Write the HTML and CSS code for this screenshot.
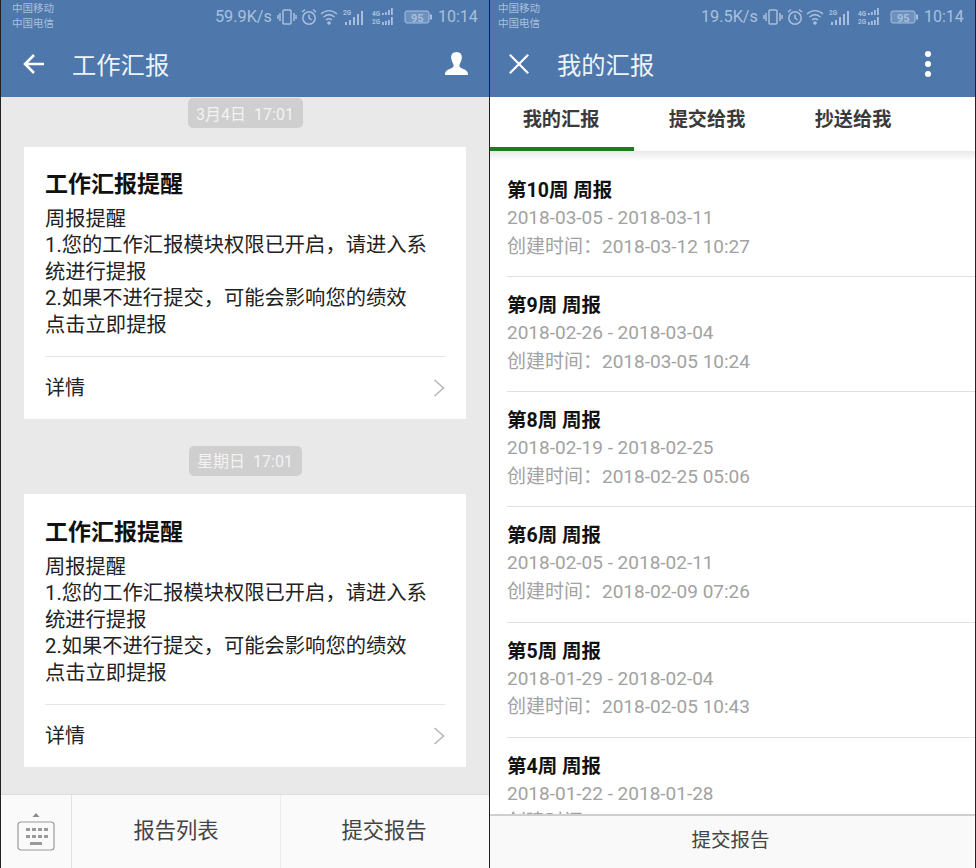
FILE: index.html
```html
<!DOCTYPE html>
<html lang="zh-CN">
<head>
<meta charset="utf-8">
<title>工作汇报</title>
<link rel="stylesheet" href="styles.css">
</head>
<body>
<svg class="defs" width="0" height="0" aria-hidden="true">
  <defs>
    <symbol id="st" viewBox="0 0 156 20">
      <g fill="none" stroke="currentColor" stroke-width="1.500">
        <rect x="6" y="3" width="8" height="14" rx="1"/>
        <path d="M3 6v8M1 8v4M17 6v8M19 8v4"/>
        <circle cx="32" cy="11" r="6.200"/>
        <path d="M32 7.500V11l2.500 2M25 5l3-2.500M39 5l-3-2.500"/>
        <path d="M44 7c5-4.500 11-4.500 16 0M46.500 10c3.500-3 7.500-3 11 0M49 13c2-1.600 4-1.600 6 0"/>
      </g>
      <g fill="currentColor">
        <circle cx="52" cy="16" r="1.800"/>
        <text x="66" y="8" class="tiny">2G</text>
        <rect x="68" y="15" width="2" height="3"/><rect x="72" y="13" width="2" height="5"/><rect x="76" y="10" width="2" height="8"/><rect x="80" y="7" width="2" height="11"/><rect x="84" y="4" width="2" height="14"/>
        <text x="95" y="9" class="tiny">4G</text>
        <text x="95" y="17" class="tiny">2G</text>
        <rect x="105" y="6" width="1.800" height="2"/><rect x="108" y="5" width="1.800" height="3"/><rect x="111" y="3" width="1.800" height="5"/><rect x="114" y="1" width="1.800" height="7"/>
        <rect x="105" y="15" width="1.800" height="3"/><rect x="108" y="14" width="1.800" height="4"/><rect x="111" y="13" width="1.800" height="5"/><rect x="114" y="10" width="1.800" height="8"/>
        <rect x="128" y="4" width="24" height="12" rx="2" opacity=".35"/>
        <rect x="153" y="7.500" width="2" height="5"/>
        <text x="134" y="14.500" class="batt">95</text>
      </g>
      <rect x="128" y="4" width="24" height="12" rx="2" fill="none" stroke="currentColor" stroke-width="1"/>
    </symbol>
  </defs>
</svg>

<main class="screens">
  <section class="phone phone-left">
    <header class="appbar">
      <div class="status">
        <div class="carriers"><span>中国移动</span><span>中国电信</span></div>
        <span class="speed">59.9K/s</span>
        <svg class="status-icons"><use href="#st"/></svg>
        <span class="clock">10:14</span>
      </div>
      <div class="titlebar">
        <svg class="nav-icon" viewBox="0 0 26 26"><path d="M23 13H4M13 4l-9 9 9 9" fill="none" stroke="#fff" stroke-width="2.600"/></svg>
        <h1 class="title title-left">工作汇报</h1>
        <svg class="user-icon" viewBox="0 0 26 26"><path d="M13 1c-4 0-6 3-5.500 6.500C8 11 9.500 13 10 14.500c.2 2-1 3-3.500 4C3.500 19.500 1 21 1 25h24c0-4-2.500-5.500-5.500-6.500-2.500-1-3.700-2-3.500-4 .5-1.500 2-3.500 2.500-7C19 4 17 1 13 1z" fill="#fff"/></svg>
      </div>
    </header>

    <div class="chat">
      <div class="pill pill-first">3月4日&nbsp;&nbsp;17:01</div>
      <article class="card">
        <h2 class="card-title">工作汇报提醒</h2>
        <p class="card-body">周报提醒<br>1.您的工作汇报模块权限已开启，请进入系统进行提报<br>2.如果不进行提交，可能会影响您的绩效<br>点击立即提报</p>
        <div class="card-foot">
          <span>详情</span>
          <svg class="chev" viewBox="0 0 12 18"><path d="M1.500 1l9 8-9 8" fill="none" stroke="#b5b5b5" stroke-width="1.500"/></svg>
        </div>
      </article>
      <div class="pill">星期日&nbsp;&nbsp;17:01</div>
      <article class="card card-second">
        <h2 class="card-title">工作汇报提醒</h2>
        <p class="card-body">周报提醒<br>1.您的工作汇报模块权限已开启，请进入系统进行提报<br>2.如果不进行提交，可能会影响您的绩效<br>点击立即提报</p>
        <div class="card-foot">
          <span>详情</span>
          <svg class="chev" viewBox="0 0 12 18"><path d="M1.500 1l9 8-9 8" fill="none" stroke="#b5b5b5" stroke-width="1.500"/></svg>
        </div>
      </article>
    </div>

    <footer class="menu">
      <div class="menu-kb">
        <svg class="kb-icon" viewBox="0 0 40 40">
          <path d="M20 1l3.500 4h-7z" fill="#8a8a8a"/>
          <rect x="2" y="10" width="36" height="28" rx="3" fill="none" stroke="#9a9a9a" stroke-width="1.200"/>
          <g fill="#9a9a9a">
            <rect x="10" y="16" width="4" height="3"/><rect x="16" y="16" width="4" height="3"/><rect x="22" y="16" width="4" height="3"/><rect x="28" y="16" width="4" height="3"/>
            <rect x="10" y="23" width="4" height="3"/><rect x="16" y="23" width="4" height="3"/><rect x="22" y="23" width="4" height="3"/><rect x="28" y="23" width="4" height="3"/>
            <rect x="14" y="30" width="12" height="3"/>
          </g>
        </svg>
      </div>
      <div class="menu-item menu-list">报告列表</div>
      <div class="menu-item menu-submit">提交报告</div>
    </footer>
  </section>

  <section class="phone phone-right">
    <header class="appbar">
      <div class="status">
        <div class="carriers"><span>中国移动</span><span>中国电信</span></div>
        <span class="speed">19.5K/s</span>
        <svg class="status-icons"><use href="#st"/></svg>
        <span class="clock">10:14</span>
      </div>
      <div class="titlebar">
        <svg class="nav-icon close-icon" viewBox="0 0 24 24"><path d="M2 2l20 20M22 2L2 22" fill="none" stroke="#fff" stroke-width="2.400"/></svg>
        <h1 class="title title-right">我的汇报</h1>
        <svg class="more-icon" viewBox="0 0 8 28"><circle cx="4" cy="4" r="3" fill="#fff"/><circle cx="4" cy="14" r="3" fill="#fff"/><circle cx="4" cy="24" r="3" fill="#fff"/></svg>
      </div>
    </header>

    <nav class="tabs">
      <div class="tab tab-active">我的汇报</div>
      <div class="tab">提交给我</div>
      <div class="tab">抄送给我</div>
    </nav>

    <div class="list">
      <div class="row"><h3>第10周 周报</h3><p>2018-03-05 - 2018-03-11</p><p>创建时间：2018-03-12 10:27</p></div>
      <div class="row"><h3>第9周 周报</h3><p>2018-02-26 - 2018-03-04</p><p>创建时间：2018-03-05 10:24</p></div>
      <div class="row"><h3>第8周 周报</h3><p>2018-02-19 - 2018-02-25</p><p>创建时间：2018-02-25 05:06</p></div>
      <div class="row"><h3>第6周 周报</h3><p>2018-02-05 - 2018-02-11</p><p>创建时间：2018-02-09 07:26</p></div>
      <div class="row"><h3>第5周 周报</h3><p>2018-01-29 - 2018-02-04</p><p>创建时间：2018-02-05 10:43</p></div>
      <div class="row"><h3>第4周 周报</h3><p>2018-01-22 - 2018-01-28</p><p>创建时间：2018-01-29 09:12</p></div>
    </div>

    <footer class="submit">提交报告</footer>
  </section>
</main>
</body>
</html>
```

FILE: styles.css
```css
* { box-sizing: border-box; margin: 0; padding: 0; }

html, body {
  width: 976px;
  height: 868px;
  overflow: hidden;
  background: #222;
}

body {
  font-family: Roboto, "Noto Sans CJK SC", "Liberation Sans", sans-serif;
}

.defs { display: block; height: 0; }

.tiny { font: 700 6.500px Roboto, sans-serif; }
.batt { font: 700 11px Roboto, sans-serif; }

.screens {
  display: flex;
  width: 976px;
  height: 868px;
}

.phone {
  display: flex;
  flex-direction: column;
  height: 868px;
  overflow: hidden;
}

.phone-left {
  width: 488px;
  margin-left: 1px;
  background: #e9e9e9;
}

.phone-right {
  width: 485px;
  margin-left: 1px;
  background: #fff;
}

.appbar {
  flex: none;
  height: 97px;
  background: #4e77ab;
}

.status {
  display: flex;
  align-items: center;
  height: 30px;
  color: #a9c0dd;
}

.carriers {
  display: flex;
  flex-direction: column;
  gap: 4px;
  flex: 1;
  padding-top: 1px;
  font-size: 10.500px;
  line-height: 11px;
}

.phone-left .carriers { padding-left: 11px; }
.phone-right .carriers { padding-left: 8px; }

.speed {
  font-size: 16.300px;
  line-height: 30px;
  margin-top: 3px;
  margin-right: 5px;
}

.status-icons {
  width: 156px;
  height: 20px;
  margin-top: 3px;
  margin-right: 5px;
}

.clock {
  font-size: 16px;
  line-height: 30px;
  width: 40px;
  margin-top: 3px;
  margin-right: 11px;
}

.titlebar {
  display: flex;
  align-items: center;
  height: 67px;
}

.nav-icon {
  flex: none;
  width: 26px;
  height: 26px;
  margin-left: 20px;
}

.close-icon {
  width: 22px;
  height: 22px;
  margin-left: 18px;
}

.title {
  flex: 1;
  font-size: 24.300px;
  font-weight: 400;
  color: #eef3f9;
}

.title-left { margin-left: 25px; }
.title-right { margin-left: 27px; }

.user-icon {
  flex: none;
  width: 25px;
  height: 25px;
  margin-right: 20px;
}

.more-icon {
  flex: none;
  width: 8px;
  height: 28px;
  margin-right: 43px;
}

.chat {
  flex: 1;
  display: flex;
  flex-direction: column;
  align-items: center;
  overflow: hidden;
}

.pill {
  width: 113px;
  height: 30px;
  margin-top: 27px;
  border-radius: 5px;
  background: #cfcfcf;
  color: #f3f3f3;
  font-size: 16px;
  line-height: 32px;
  text-align: center;
  white-space: nowrap;
}

.pill-first {
  width: 115px;
  margin-top: 1px;
  line-height: 33px;
}

.card {
  width: 442px;
  margin-top: 19px;
  padding: 23px 21px 0;
  background: #fff;
}

.card-second {
  margin-top: 18px;
  padding-top: 24px;
}

.card-title {
  font-size: 23px;
  font-weight: 700;
  line-height: 30px;
  color: #111;
}

.card-body {
  margin-top: 6px;
  font-size: 20.300px;
  line-height: 26.400px;
  color: #222;
}

.card-foot {
  display: flex;
  align-items: center;
  justify-content: space-between;
  height: 63px;
  margin-top: 18px;
  padding-bottom: 3px;
  border-top: 1px solid #e6e6e6;
  font-size: 20px;
  color: #222;
}

.chev { width: 12px; height: 18px; margin-top: 3px; }

.menu {
  flex: none;
  display: flex;
  height: 74px;
  background: #fafafa;
  border-top: 1px solid #dedede;
  font-size: 21.300px;
  color: #444;
}

.menu-kb {
  flex: none;
  width: 71px;
  display: flex;
  align-items: center;
  justify-content: center;
  border-right: 1px solid #e2e2e2;
}

.kb-icon { width: 40px; height: 40px; }

.menu-item {
  display: flex;
  align-items: center;
  justify-content: center;
  padding-bottom: 6px;
}

.menu-list {
  flex: none;
  width: 208px;
}

.menu-submit {
  flex: 1;
  padding-right: 2px;
  border-left: 1px solid #ececec;
}

.tabs {
  flex: none;
  display: flex;
  height: 54px;
  background: #fff;
}

.tab {
  width: 146px;
  height: 54px;
  font-size: 19.200px;
  font-weight: 700;
  line-height: 46px;
  text-align: center;
  color: #3a3a3a;
}

.tab-active {
  width: 144px;
  padding-right: 2px;
  border-bottom: 4px solid #1f7a22;
}

.list {
  flex: 1;
  min-height: 0;
  overflow: hidden;
  padding-left: 17px;
  background: linear-gradient(#e9e9e9, #fff 10px);
}

.row {
  height: 115.200px;
  padding-top: 15px;
  border-bottom: 1px solid #e0e0e0;
}

.row:first-child { height: 126px; padding-top: 26px; }

.row h3 {
  font-size: 19.500px;
  font-weight: 700;
  line-height: 27px;
  color: #111;
}

.row p {
  font-size: 19px;
  line-height: 28.500px;
  color: #a2a2a2;
}

.submit {
  flex: none;
  height: 54px;
  padding-right: 4px;
  background: #f9f9f9;
  border-top: 2px solid #cfcfcf;
  font-size: 19.500px;
  line-height: 50px;
  text-align: center;
  color: #444;
}
```
